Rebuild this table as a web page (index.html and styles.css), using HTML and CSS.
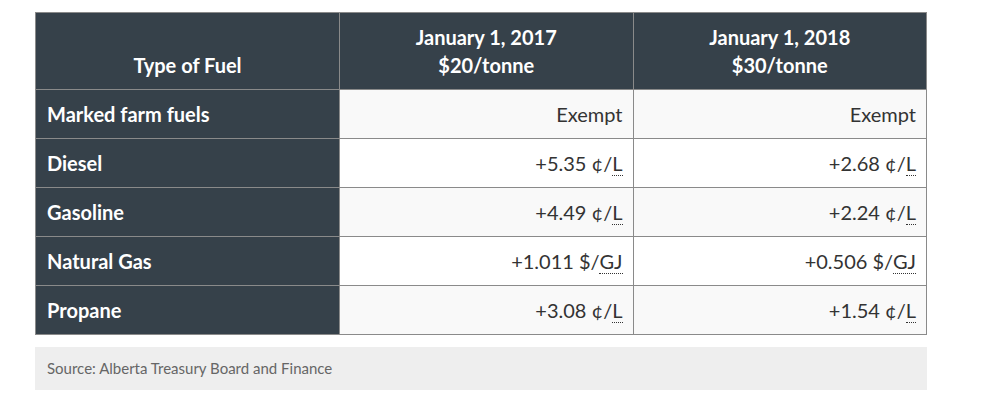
FILE: index.html
```html
<!DOCTYPE html>
<html>
<head>
<meta charset="utf-8">
<link rel="stylesheet" href="styles.css">
</head>
<body>
<div class="wrap">
  <table class="fuel">
    <thead>
      <tr>
        <th class="c1">Type of Fuel</th>
        <th class="c2">January 1, 2017<br>$20/tonne</th>
        <th class="c3">January 1, 2018<br>$30/tonne</th>
      </tr>
    </thead>
    <tbody>
      <tr class="alt">
        <th>Marked farm fuels</th>
        <td>Exempt</td>
        <td>Exempt</td>
      </tr>
      <tr>
        <th>Diesel</th>
        <td>+5.35 ¢/<abbr>L</abbr></td>
        <td>+2.68 ¢/<abbr>L</abbr></td>
      </tr>
      <tr class="alt">
        <th>Gasoline</th>
        <td>+4.49 ¢/<abbr>L</abbr></td>
        <td>+2.24 ¢/<abbr>L</abbr></td>
      </tr>
      <tr>
        <th>Natural Gas</th>
        <td>+1.011 $/<abbr>GJ</abbr></td>
        <td>+0.506 $/<abbr>GJ</abbr></td>
      </tr>
      <tr class="alt">
        <th>Propane</th>
        <td>+3.08 ¢/<abbr>L</abbr></td>
        <td>+1.54 ¢/<abbr>L</abbr></td>
      </tr>
    </tbody>
  </table>
  <div class="source">Source: Alberta Treasury Board and Finance</div>
</div>
</body>
</html>
```

FILE: styles.css
```css
html, body {
  margin: 0;
  padding: 0;
  background: #ffffff;
}
body {
  font-family: Lato, "Open Sans", sans-serif;
  color: #333333;
}
.wrap {
  width: 892px;
  padding: 12px 0 0 35px;
}
.fuel {
  width: 892px;
  border-collapse: collapse;
  table-layout: fixed;
  font-size: 20px;
  line-height: 28px;
}
.fuel th, .fuel td {
  border: 1px solid #8a8a8a;
  padding: 10px 10px 10px 11px;
}
.fuel thead th {
  background: #36414a;
  color: #ffffff;
  font-weight: 700;
  text-align: center;
  vertical-align: bottom;
  padding: 10px 11px 10px;
}
.fuel .c1 { width: 281px; }
.fuel tbody th {
  background: #36414a;
  color: #ffffff;
  font-weight: 700;
  text-align: left;
}
.fuel td {
  text-align: right;
  background: #ffffff;
  color: #333333;
}
.fuel tr.alt td {
  background: #f9f9f9;
}
abbr {
  text-decoration: none;
  border-bottom: 1px dotted #333333;
}
.source {
  margin-top: 12px;
  background: #eeeeee;
  font-size: 15px;
  line-height: 20px;
  color: #666666;
  padding: 11px 12px 12px;
}
```
